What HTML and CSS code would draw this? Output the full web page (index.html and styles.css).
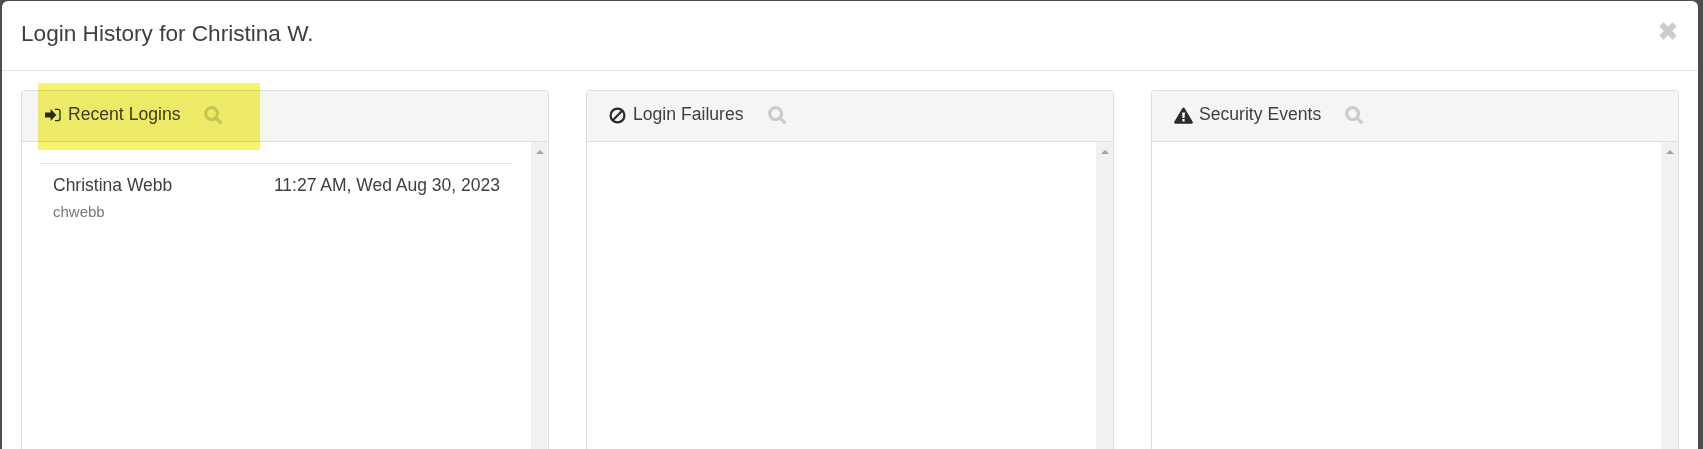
FILE: index.html
```html
<!DOCTYPE html>
<html>
<head>
  <meta charset="utf-8">
  <meta name="viewport" content="width=device-width, initial-scale=1">
  <title>Login History</title>
  <link rel="stylesheet" href="styles.css">
</head>
<body class="lh-page">

<div class="lh-modal">
  <header class="lh-header">
    <h1 class="lh-title">Login History for Christina W.</h1>
    <svg class="lh-close" viewBox="0 0 18 18"><path d="M5 1.2 9 5.2 13 1.2 16.8 5 12.8 9 16.8 13 13 16.8 9 12.8 5 16.8 1.2 13 5.2 9 1.2 5Z"/></svg>
  </header>

  <div class="lh-columns">
    <section class="lh-panel">
      <div class="lh-panel-head">
        <svg class="lh-icon lh-icon-signin" viewBox="0 0 16 16"><path d="M0 5.4H5.6V2L11.4 8 5.6 14V10.6H0Z"/><path class="lh-stroke lh-thin" d="M10 2.4H13C14.2 2.4 15 3.2 15 4.4V11.6C15 12.8 14.2 13.6 13 13.6H10"/></svg>
        <span class="lh-panel-title">Recent Logins</span>
        <svg class="lh-search" viewBox="0 0 18 18"><circle cx="7.2" cy="7.2" r="5.6"/><path d="M11.4 11.4 16.4 16.4"/></svg>
      </div>
      <div class="lh-panel-body">
        <div class="lh-list">
          <div class="lh-row">
            <div class="lh-user">
              <div class="lh-name">Christina Webb</div>
              <div class="lh-login">chwebb</div>
            </div>
            <div class="lh-time">11:27 AM, Wed Aug 30, 2023</div>
          </div>
        </div>
        <div class="lh-scroll"><span class="lh-arrow"></span></div>
      </div>
    </section>

    <section class="lh-panel">
      <div class="lh-panel-head">
        <svg class="lh-icon lh-icon-ban" viewBox="0 0 16 16"><circle class="lh-stroke lh-ban" cx="8" cy="8" r="6.5"/><path class="lh-stroke lh-ban" d="M3.6 12.4 12.4 3.6"/></svg>
        <span class="lh-panel-title">Login Failures</span>
        <svg class="lh-search" viewBox="0 0 18 18"><circle cx="7.2" cy="7.2" r="5.6"/><path d="M11.4 11.4 16.4 16.4"/></svg>
      </div>
      <div class="lh-panel-body">
        <div class="lh-list"></div>
        <div class="lh-scroll"><span class="lh-arrow"></span></div>
      </div>
    </section>

    <section class="lh-panel">
      <div class="lh-panel-head">
        <svg class="lh-icon lh-icon-warn" viewBox="0 0 18 16"><path fill-rule="evenodd" d="M9 .4C9.5.4 9.9.7 10.1 1.1L17.7 14C18.2 14.9 17.6 15.8 16.7 15.8H1.3C.4 15.8-.2 14.9.3 14L7.9 1.1C8.1.7 8.5.4 9 .4ZM7.6 5.2 8 10.4H10L10.4 5.2ZM7.9 11.4V13.8H10.1V11.4Z"/></svg>
        <span class="lh-panel-title">Security Events</span>
        <svg class="lh-search" viewBox="0 0 18 18"><circle cx="7.2" cy="7.2" r="5.6"/><path d="M11.4 11.4 16.4 16.4"/></svg>
      </div>
      <div class="lh-panel-body">
        <div class="lh-list"></div>
        <div class="lh-scroll"><span class="lh-arrow"></span></div>
      </div>
    </section>
  </div>

  <div class="lh-highlight"></div>
</div>

</body>
</html>
```

FILE: styles.css
```css
*,
*::before,
*::after {
  box-sizing: border-box;
}

.lh-page {
  margin: 0;
  height: 100vh;
  overflow: hidden;
  padding: 1px 5px 0 2px;
  font-family: "Liberation Sans", Arial, sans-serif;
  color: #3f3f3f;
  background: #4d4d4d;
}

.lh-modal {
  position: relative;
  height: 100%;
  background: #fff;
  border-radius: 6px 6px 0 0;
  overflow: hidden;
}

.lh-header {
  display: flex;
  align-items: center;
  justify-content: space-between;
  height: 70px;
  padding: 0 20px 3px 19px;
  border-bottom: 1px solid #e5e5e5;
}

.lh-title {
  margin: 0;
  font-size: 22.6px;
  font-weight: normal;
}

.lh-close {
  width: 20px;
  height: 20px;
  margin-bottom: 7px;
  fill: #ccc;
}

.lh-columns {
  display: grid;
  grid-template-columns: repeat(3, 528px);
  gap: 37px;
  height: 100%;
  padding: 19px 0 0 19px;
}

.lh-panel {
  display: flex;
  flex-direction: column;
  border: 1px solid #ddd;
  border-bottom: none;
  border-radius: 4px 4px 0 0;
}

.lh-panel-head {
  display: flex;
  align-items: center;
  height: 51px;
  padding-left: 22px;
  background: #f5f5f5;
  border-bottom: 1px solid #ddd;
}

.lh-icon {
  width: 17px;
  height: 17px;
  margin-right: 7px;
  margin-bottom: 2px;
  fill: #2b2b2b;
}

.lh-icon-signin {
  width: 16px;
  height: 16px;
  margin-left: 1px;
  margin-right: 7px;
}

.lh-icon-warn {
  width: 19px;
  margin-right: 6px;
}

.lh-stroke {
  fill: none;
  stroke: #2b2b2b;
  stroke-width: 1.5;
}

.lh-thin {
  stroke-width: 1.3;
}

.lh-ban {
  stroke-width: 2.1;
}

.lh-panel-title {
  font-size: 17.6px;
  margin-bottom: 3px;
}

.lh-search {
  width: 19px;
  height: 19px;
  margin-left: 24px;
  margin-bottom: 2px;
  fill: none;
  stroke: #ccc;
  stroke-width: 3;
}

.lh-panel-body {
  display: flex;
  flex: 1;
  min-height: 0;
}

.lh-list {
  flex: 1;
  padding: 21px 19px 0 18px;
}

.lh-row {
  display: flex;
  justify-content: space-between;
  padding: 9px 12px 0 13px;
  border-top: 1px solid #e5e5e5;
}

.lh-name,
.lh-time {
  font-size: 17.5px;
  line-height: 24px;
}

.lh-login {
  margin-top: 5px;
  font-size: 15px;
  line-height: 20px;
  color: #777;
}

.lh-scroll {
  display: flex;
  justify-content: center;
  width: 17px;
  padding-top: 8px;
  background: #f1f1f1;
}

.lh-arrow {
  width: 0;
  height: 0;
  border: 4px solid transparent;
  border-top: none;
  border-bottom: 4px solid #a3a3a3;
}

.lh-highlight {
  position: absolute;
  top: 82px;
  left: 36px;
  width: 222px;
  height: 67px;
  background: #f7f46b;
  mix-blend-mode: multiply;
}
```
